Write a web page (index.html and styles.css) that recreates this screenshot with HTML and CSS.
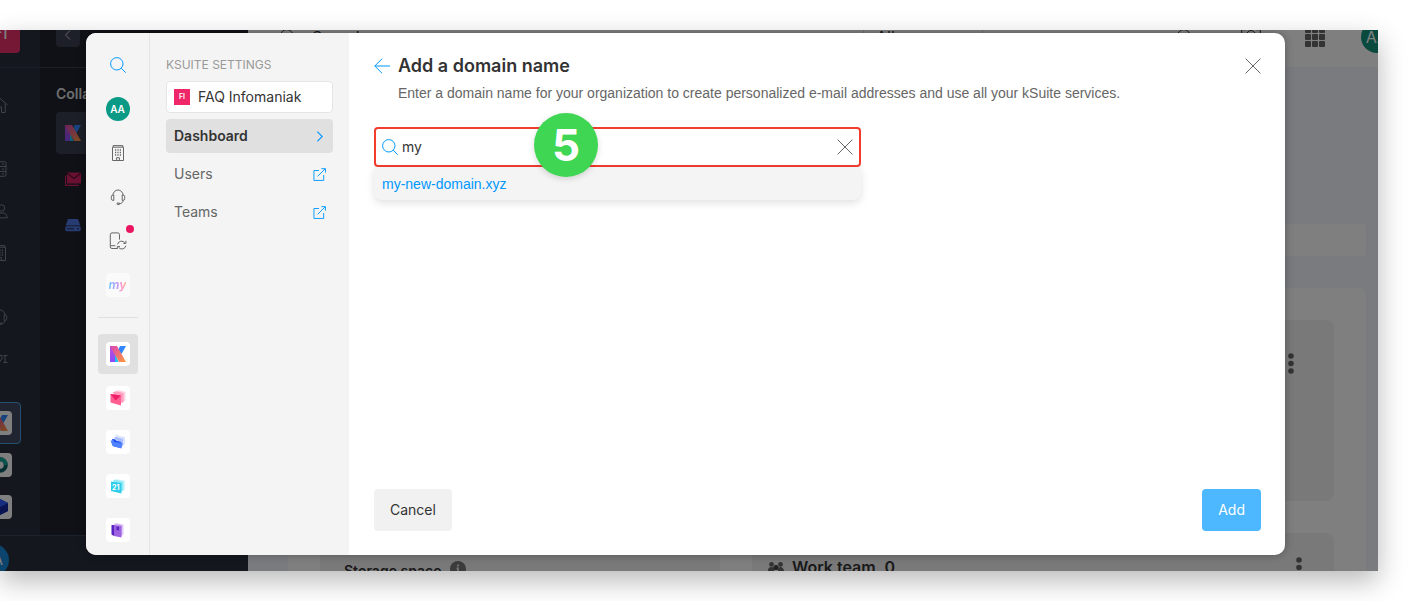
FILE: index.html
```html
<!DOCTYPE html>
<html lang="en">
<head>
    <meta charset="UTF-8">
    <meta name="viewport" content="width=device-width, initial-scale=1.0">
    <title>kSuite - Add a domain name</title>
    <link rel="stylesheet" href="styles.css">
</head>
<body>

<svg class="sprite" aria-hidden="true">
    <defs>
        <linearGradient id="k-left" x1="0" y1="0" x2="0" y2="1">
            <stop offset="0" stop-color="#c44fd0"/>
            <stop offset="1" stop-color="#8a4bff"/>
        </linearGradient>
        <linearGradient id="k-band" x1="0" y1="0" x2="1" y2="1">
            <stop offset="0" stop-color="#d844b8"/>
            <stop offset="1" stop-color="#ff9a3c"/>
        </linearGradient>
    </defs>
    <symbol id="i-search" viewBox="0 0 16 16"><circle cx="6.8" cy="6.8" r="6.2"/><path d="M11.2 11.2l4.5 4.5"/></symbol>
    <symbol id="i-building" viewBox="0 0 16 16"><path d="M2.5 2.2h11v13.3h-11zM3.2 2V.6h9.6V2M6.6 15.3v-2.6h2.8v2.6"/><path d="M5 5h1.2M7.4 5h1.2M9.8 5H11M5 7.5h1.2M7.4 7.5h1.2M9.8 7.5H11M5 10h1.2M7.4 10h1.2M9.8 10H11" stroke-width="1.4"/></symbol>
    <symbol id="i-headset" viewBox="0 0 16 16"><path d="M3 6.2a5 5.2 0 0 1 10 0M3.8 6v5.400H3A1.800 1.800 0 0 1 1.300 9.600V7.800A1.800 1.800 0 0 1 3 6zM12.200 6v5.400h.8a1.800 1.800 0 0 0 1.700-1.800V7.800A1.800 1.800 0 0 0 13 6zM13 11.400c0 2-1.500 3.200-3.600 3.400M7.200 14h2.200v1.400H7.200z"/></symbol>
    <symbol id="i-sync" viewBox="0 0 18 18"><path d="M8 16.500H3A1.700 1.700 0 0 1 1.300 14.800V2.600A1.700 1.700 0 0 1 3 .9h5.800a1.700 1.700 0 0 1 1.700 1.700v5M1.400 13.700h5"/><path d="M8.600 12.400a4 4 0 0 1 7.300-1.400M16.900 8.800v2.600h-2.600M16.800 13.700a4 4 0 0 1-7.400 1.300M8.300 17v-2.500h2.600"/></symbol>
    <symbol id="i-k" viewBox="0 0 16 16"><path d="M0 0h6v16H0z" fill="url(#k-left)"/><path d="M5 7l3.500 9H5z" fill="#1bc4f0"/><path d="M10 0h6l-4.500 8L8 4z" fill="#2f86ff"/><path d="M0 0h7l9 16H9z" fill="url(#k-band)"/></symbol>
    <symbol id="i-close" viewBox="0 0 16 16"><path d="M.6.6l14.800 14.800M15.400.6L.6 15.400"/></symbol>
    <symbol id="i-external" viewBox="0 0 14 14"><path d="M6.500 2.700H1v10.700h10.500V7.600M5 9l8-8M9 .7h4.400V5"/></symbol>
    <symbol id="i-dots" viewBox="0 0 6 21"><circle cx="3" cy="3" r="2.800"/><circle cx="3" cy="10.500" r="2.800"/><circle cx="3" cy="18" r="2.800"/></symbol>
    <symbol id="i-users" viewBox="0 0 16 16"><circle cx="9.500" cy="5" r="3.200"/><path d="M1 14c.3-3 2-4.500 4.500-4.700M5.500 14.800c0-3.600 1.500-5 4.500-5s5 1.600 5.300 5zM4.500 8A2.500 2.500 0 1 1 6 3.200"/></symbol>
</svg>

<div class="frame">
    <div class="app">
        <aside class="dark-nav">
            <div class="dark-rail">
                <div class="org"><span class="org-logo">FI</span></div>
                <nav class="rail-groups" aria-label="Products">
                    <div class="rail-group">
                        <a href="#"><svg class="line" viewBox="0 0 16 16"><path d="M.5 8L8 1.300 15.500 8M2.800 6.500v9h3.700V10h3v5.500h3.700v-9"/></svg></a>
                    </div>
                    <div class="rail-group">
                        <a href="#"><svg class="line" viewBox="0 0 16 16"><rect x="1.500" y=".7" width="12.500" height="14.600" rx="1.500"/><path d="M1.500 5.500H14M1.500 10.400H14M10 3h2M10 8h2M10 13h2"/></svg></a>
                        <a href="#"><svg class="line"><use href="#i-users"/></svg></a>
                        <a href="#"><svg class="line"><use href="#i-building"/></svg></a>
                    </div>
                    <div class="rail-group">
                        <a href="#"><svg class="line"><use href="#i-headset"/></svg></a>
                        <a href="#"><svg class="line" viewBox="0 0 16 16"><path d="M15.500 4.500h-4M15.500 11.500h-4M13 4.500v7M1 12l4-3.500M5 4.500h5v3L7.500 11 4.500 8zM2 4l2 2"/></svg></a>
                    </div>
                    <div class="rail-group">
                        <a href="#" class="picked"><span class="tile"><svg><use href="#i-k"/></svg></span></a>
                        <a href="#"><span class="tile"><svg viewBox="0 0 16 16"><circle cx="8" cy="8" r="5.800" fill="none" stroke="#0b5d66" stroke-width="4"/><path d="M8 2.200A5.800 5.800 0 0 1 13.800 8" fill="none" stroke="#19a79c" stroke-width="4"/></svg></span></a>
                        <a href="#"><span class="tile"><svg viewBox="0 0 16 16"><path d="M8 0l8 4v8l-8 4-8-4V4z" fill="#1d3fd0"/><path d="M8 8l8-4v8l-8 4z" fill="#1428a0"/><path d="M8 8l8-4-8-4z" fill="#2c5cff"/></svg></span></a>
                    </div>
                </nav>
            </div>
            <div class="dark-panel">
                <div class="panel-top">
                    <button type="button" class="collapse" aria-label="Collapse"><svg viewBox="0 0 10 10"><path d="M7 .5L2.500 5 7 9.500"/></svg></button>
                </div>
                <h2>Collaboration</h2>
                <a href="#" class="panel-item current" aria-label="kSuite"><svg><use href="#i-k"/></svg></a>
                <a href="#" class="panel-item" aria-label="Mail"><svg viewBox="0 0 16 16"><path d="M2 1.500h14v11H2z" fill="#d42060"/><path d="M2 2l7 5.500L16 2" fill="none" stroke="#5c1231" stroke-width="1.200"/><path d="M.6 4.500v9.800H14" fill="none" stroke="#d42060" stroke-width="1.200"/></svg></a>
                <a href="#" class="panel-item" aria-label="Drive"><svg viewBox="0 0 16 16"><path d="M3 2h10l2.300 6.500H.7z" fill="#5078e8"/><rect x=".3" y="9.300" width="15.400" height="5" rx="1.500" fill="#5078e8"/><path d="M2 11.800h7M12 11.800h2" stroke="#1d2440"/></svg></a>
            </div>
            <div class="dark-foot"><span class="help">A</span></div>
        </aside>

        <div class="content">
            <header class="topbar">
                <svg class="line"><use href="#i-search"/></svg>
                <span class="topbar-search">Search</span>
                <span class="topbar-scope">All</span>
                <svg class="line"><use href="#i-search"/></svg>
                <svg class="line wide" viewBox="0 0 20 16"><path d="M.7 5V.7H5M15 .7h4.300V5M19.300 11v4.300H15M5 15.300H.7V11"/><circle cx="10" cy="6" r="4.500"/></svg>
                <span class="grid-dots"><i></i><i></i><i></i><i></i><i></i><i></i><i></i><i></i><i></i></span>
                <span class="me">AA</span>
            </header>
            <div class="banner"></div>
            <div class="board">
                <div class="block tall"><svg class="more"><use href="#i-dots"/></svg></div>
                <div class="block">Storage space
                    <svg class="info" viewBox="0 0 16 16"><circle cx="8" cy="8" r="8" fill="#777"/><path d="M8 3.500v2M6.500 7.500H8V12" stroke="#ddd" stroke-width="2" fill="none"/></svg>
                </div>
                <div class="block team">
                    <svg class="people" viewBox="0 0 16 14"><g fill="#666"><circle cx="3.500" cy="2.400" r="2.400"/><circle cx="12.500" cy="2.400" r="2.400"/><path d="M0 12V8.500Q0 5 3.500 5T6 9v3zM10 12V9q0-4 2.500-4T16 8.500V12z"/></g><circle cx="8" cy="5.500" r="2.600" fill="#444"/><path d="M4 14v-2.500Q4 9 8 9t4 2.500V14z" fill="#444"/></svg>
                    Work team, 0
                    <svg class="more"><use href="#i-dots"/></svg>
                </div>
            </div>
        </div>
    </div>

    <div class="backdrop"></div>

    <div class="modal" role="dialog" aria-labelledby="title">
        <nav class="apps" aria-label="Applications">
            <a href="#" class="blue" aria-label="Search"><svg class="line"><use href="#i-search"/></svg></a>
            <a href="#"><span class="avatar">AA</span></a>
            <a href="#" aria-label="Organization"><svg class="line"><use href="#i-building"/></svg></a>
            <a href="#" aria-label="Support"><svg class="line"><use href="#i-headset"/></svg></a>
            <a href="#" aria-label="Sync" class="has-badge"><svg class="line large"><use href="#i-sync"/></svg></a>
            <a href="#"><span class="tile my"><span>my</span></span></a>
            <hr>
            <a href="#" class="active" aria-label="kSuite"><span class="tile"><svg><use href="#i-k"/></svg></span></a>
            <a href="#" aria-label="Mail"><span class="tile"><svg viewBox="0 0 16 16"><path d="M5 1.500L9 0l6.500 2v8.500L12 13z" fill="#ffd3e1"/><path d="M2.500 2.500L6 1.300 13.500 3v9l-2 1z" fill="#ff9dbd"/><path d="M.5 4L11 5.500V15.500L.5 12.500z" fill="#ff5e92"/><path d="M.5 4L11 5.500 5.500 10.500z" fill="#f01e68"/></svg></span></a>
            <a href="#" aria-label="Drive"><span class="tile"><svg viewBox="0 0 16 16"><path d="M5 1.500L7 .5l2 1.500 6 1v7l-3 3z" fill="#dbe4ff"/><path d="M3.500 3.500L6 3l7 2v7z" fill="#a9beff"/><path d="M2 5l3 .2 1.500 1.500L11 8v6l-7-1.500z" fill="#1d4bf0"/><path d="M.5 6.500h3L4.500 8l8 1-1 5.500-9-2.500z" fill="#4f82ff"/></svg></span></a>
            <a href="#" aria-label="Calendar"><span class="tile"><svg viewBox="0 0 16 16"><path d="M6 1l9 1.500v9L12 13z" fill="#d4f7fb"/><path d="M3 2.500L5 1.500l8.500 2v9l-2 1z" fill="#93e9f5"/><path d="M1 3.500L11.500 5v10.500L1 13z" fill="#2fcdea"/><text x="2" y="12" font-size="7">21</text></svg></span></a>
            <a href="#" aria-label="Notes"><span class="tile"><svg viewBox="0 0 16 16"><path d="M7 1l7 1.500v9.500L12 14z" fill="#eee0fb"/><path d="M4 2l2-.7 6.500 1.700v10L11 14z" fill="#d1b2f3"/><path d="M4 3l7.500 1v11.500L4 14z" fill="#9c62e0"/><path d="M1.500 3H4v11l-2.500-1.500z" fill="#5a22c0"/><path d="M6.500 4.500l2.500.3v4L7.800 8l-1.300.5z" fill="#5a22c0"/></svg></span></a>
        </nav>

        <aside class="settings">
            <h3>KSUITE SETTINGS</h3>
            <button type="button" class="org-select"><span class="org-badge">FI</span>FAQ Infomaniak</button>
            <nav class="menu" aria-label="Settings">
                <a href="#" class="active">Dashboard<svg class="chevron" viewBox="0 0 12 12"><path d="M4 1.500L8.500 6 4 10.500"/></svg></a>
                <a href="#">Users<svg><use href="#i-external"/></svg></a>
                <a href="#">Teams<svg><use href="#i-external"/></svg></a>
            </nav>
        </aside>

        <main class="main">
            <header class="main-head">
                <a href="#" class="back" aria-label="Back"><svg viewBox="0 0 16 16"><path d="M16 8H.8M8 .8L.8 8 8 15.200"/></svg></a>
                <h1 id="title">Add a domain name</h1>
                <button type="button" class="icon-btn" aria-label="Close"><svg class="line"><use href="#i-close"/></svg></button>
            </header>
            <p class="intro">Enter a domain name for your organization to create personalized e-mail addresses and use all your kSuite services.</p>

            <form class="finder" id="domain-form">
                <div class="field">
                    <svg class="line"><use href="#i-search"/></svg>
                    <input type="text" value="my" aria-label="Domain name">
                    <button type="button" class="icon-btn" aria-label="Clear"><svg class="line"><use href="#i-close"/></svg></button>
                </div>
                <a href="#" class="suggestion">my-new-domain.xyz</a>
                <span class="step">5</span>
            </form>

            <footer class="actions">
                <button type="button" class="btn">Cancel</button>
                <button type="submit" form="domain-form" class="btn btn-primary">Add</button>
            </footer>
        </main>
    </div>
</div>

</body>
</html>
```
FILE: styles.css
```css
* {
    box-sizing: border-box;
}

body {
    margin: 0;
    background: #fff;
    color: #333;
    font-family: Inter, "Liberation Sans", Arial, sans-serif;
    font-size: 14px;
    line-height: 20px;
    overflow: hidden;
}

a {
    color: inherit;
    text-decoration: none;
}

button {
    font: inherit;
    color: inherit;
    border: 0;
    cursor: pointer;
}

h1, h2, h3, p {
    margin: 0;
}

svg {
    display: block;
    width: 16px;
    height: 16px;
    flex: none;
}

.sprite {
    position: absolute;
    width: 0;
    height: 0;
}

.line {
    fill: none;
    stroke: currentColor;
    stroke-width: 1;
}

.tile {
    display: flex;
    align-items: center;
    justify-content: center;
    width: 24px;
    height: 24px;
    border-radius: 4px;
    background: #fff;
}

.frame {
    position: relative;
    height: calc(100vh - 60px);
    margin: 30px 30px 30px 0;
    overflow: hidden;
}

body::before {
    content: "";
    position: absolute;
    inset: 30px 30px 30px 0;
    box-shadow: 0 10px 26px rgba(0, 0, 0, 0.28);
}

/* page behind the dialog */
.app {
    display: flex;
    height: calc(100% + 23px);
    margin: -23px 0 0 -40px;
}

.dark-nav {
    display: grid;
    grid-template: 1fr 36px / 80px 208px;
    background: #282e3c;
}

.dark-rail {
    display: flex;
    flex-direction: column;
    align-items: center;
    color: #7c8894;
}

.org {
    display: flex;
    align-items: flex-end;
    justify-content: center;
    width: 100%;
    height: 61px;
    padding-bottom: 14px;
    border-bottom: 1px solid #3a4050;
}

.org-logo {
    width: 40px;
    height: 40px;
    border-radius: 4px;
    background: #e8306c;
    color: #fff;
    font-size: 18px;
    line-height: 40px;
    text-align: center;
}

.rail-groups {
    display: flex;
    flex-direction: column;
    gap: 22px;
    padding-top: 16px;
}

.rail-group a {
    display: flex;
    align-items: center;
    justify-content: center;
    width: 42px;
    height: 42px;
}

.rail-group .picked {
    border: 1px solid #4a9fe0;
    border-radius: 4px;
    background: #404860;
}

.dark-panel {
    background: #1e222d;
}

.panel-top {
    display: flex;
    align-items: flex-end;
    height: 61px;
    padding: 0 16px 20px;
    border-bottom: 1px solid #3a4050;
}

.collapse {
    display: flex;
    align-items: center;
    justify-content: center;
    width: 24px;
    height: 24px;
    padding: 0;
    border-radius: 4px;
    background: #3a4050;
}

.collapse svg {
    width: 10px;
    height: 10px;
    fill: none;
    stroke: #ccc;
}

.dark-panel h2 {
    padding: 16px 16px 8px;
    color: #ddd;
    font-size: 14px;
    font-weight: 600;
}

.panel-item {
    display: flex;
    align-items: center;
    height: 42px;
    margin: 0 16px 4px;
    padding-left: 9px;
    border-radius: 4px;
}

.panel-item.current {
    background: #3a3e50;
}

.dark-foot {
    grid-column: 1 / -1;
    padding: 8px 31px;
    border-top: 1px solid #3a4658;
}

.help {
    display: block;
    width: 32px;
    height: 32px;
    margin-left: -14px;
    padding-right: 6px;
    border-radius: 50%;
    background: #1688d8;
    color: #fff;
    line-height: 32px;
    text-align: right;
}

.content {
    flex: 1;
    background: #f4f6fc;
}

.topbar {
    display: flex;
    align-items: center;
    height: 60px;
    padding-left: 32px;
    background: #fff;
    font-size: 16px;
    overflow: hidden;
}

.topbar-search {
    flex: 1;
    padding-left: 16px;
}

.topbar-scope {
    width: 120px;
    margin-right: 194px;
    padding: 8px 12px;
    border: solid #ddd;
    border-width: 0 1px;
}

.topbar .wide {
    width: 20px;
    margin: 0 44px 0 48px;
}

.grid-dots {
    display: grid;
    grid-template-columns: repeat(3, 6px);
    gap: 1px;
}

.grid-dots i {
    height: 6px;
    border-radius: 1px;
    background: #666;
}

.me {
    width: 32px;
    height: 32px;
    margin: 0 -15px 0 36px;
    border-radius: 50%;
    background: #12927c;
    color: #fff;
    line-height: 32px;
    text-align: center;
}

.banner {
    height: 32px;
    margin: 157px 12px 32px 40px;
    border-radius: 4px;
    background: #fff;
}

.board {
    display: grid;
    grid-template: 181px 1fr / 400px 1fr;
    gap: 32px;
    height: 400px;
    margin: 0 12px 0 40px;
    padding: 32px;
    border-radius: 8px;
    background: #fff;
}

.block {
    display: flex;
    align-items: flex-start;
    gap: 8px;
    padding: 28px 24px;
    border-radius: 8px;
    background: #f3f3f3;
    font-weight: 600;
}

.block.tall {
    grid-column: 1 / -1;
    padding: 33px 40px;
}

.block.team {
    padding: 24px 32px 24px 16px;
    font-size: 16px;
}

.more {
    width: 6px;
    height: 21px;
    margin-left: auto;
    fill: #666;
}

.people {
    margin-top: 4px;
}

.backdrop {
    position: absolute;
    inset: 0;
    background: rgba(0, 0, 0, 0.5);
}

/* dialog */
.modal {
    position: absolute;
    inset: 3px 93px 16px 86px;
    display: flex;
    border-radius: 10px;
    background: #fff;
    box-shadow: 0 0 8px rgba(0, 0, 0, 0.3);
    overflow: hidden;
}

.apps {
    width: 64px;
    padding-top: 12px;
    border-right: 1px solid #e5e5e5;
    background: #f4f4f4;
    color: #666;
}

.apps a {
    position: relative;
    display: flex;
    align-items: center;
    justify-content: center;
    width: 40px;
    height: 40px;
    margin: 0 auto;
    border-radius: 4px;
}

.apps .blue {
    color: #0098ff;
}

.apps .active {
    background: #e0e0e0;
}

.apps a + a {
    margin-top: 4px;
}

.apps hr {
    width: 40px;
    height: 1px;
    margin: 12px auto 16px;
    border: 0;
    background: #e0e0e0;
}

.apps .large {
    width: 18px;
    height: 18px;
}

.has-badge::after {
    content: "";
    position: absolute;
    top: 4px;
    right: 4px;
    width: 8px;
    height: 8px;
    border-radius: 50%;
    background: #ea1560;
}

.avatar {
    width: 24px;
    height: 24px;
    border-radius: 50%;
    background: #0a9a86;
    color: #fff;
    font-size: 10px;
    font-weight: 600;
    line-height: 24px;
    text-align: center;
}

.apps text {
    fill: #fff;
    font-weight: bold;
}

.my {
    background: #fafafa;
    font-size: 12px;
    font-style: italic;
    font-weight: bold;
}

.my span {
    background: linear-gradient(90deg, #7cc8ff, #b79cff 45%, #ff9cc8 75%, #ffb89c);
    background-clip: text;
    color: transparent;
}

.settings {
    width: 199px;
    padding: 22px 16px;
    background: #f4f4f4;
}

.settings h3 {
    margin-bottom: 6px;
    color: #999;
    font-size: 12px;
    font-weight: normal;
}

.org-select {
    display: flex;
    align-items: center;
    gap: 8px;
    width: 100%;
    height: 32px;
    margin-bottom: 6px;
    padding: 0 7px;
    border: 1px solid #e5e5e5;
    border-radius: 4px;
    background: #fff;
}

.org-badge {
    width: 16px;
    height: 16px;
    background: #f0266a;
    color: #fff;
    font-size: 7px;
    font-weight: 600;
    line-height: 16px;
    text-align: center;
}

.menu {
    display: flex;
    flex-direction: column;
    gap: 4px;
}

.menu a {
    display: flex;
    align-items: center;
    justify-content: space-between;
    height: 34px;
    padding: 0 7px 0 8px;
    border-radius: 4px;
    color: #666;
}

.menu .active {
    background: #e0e0e0;
    color: #333;
    font-weight: 600;
}

.menu svg {
    width: 13px;
    height: 13px;
    fill: none;
    stroke: #0098ff;
}

.main {
    display: flex;
    flex: 1;
    flex-direction: column;
    padding: 21px 24px 24px 25px;
}

.main-head {
    display: flex;
    align-items: center;
    gap: 8px;
    height: 24px;
}

.main-head h1 {
    flex: 1;
    font-size: 18px;
    font-weight: 600;
}

.back svg {
    fill: none;
    stroke: #0098ff;
}

.icon-btn {
    padding: 0;
    background: none;
    color: #666;
}

.intro {
    margin: 5px 0 24px;
    padding-left: 24px;
    color: #666;
    font-family: "Liberation Sans", Arial, sans-serif;
}

.finder {
    position: relative;
    width: 487px;
}

.field {
    display: flex;
    align-items: center;
    gap: 4px;
    height: 40px;
    padding: 0 6px;
    border: 2px solid #f23c2e;
    border-radius: 4px;
    color: #0098ff;
}

.field input {
    flex: 1;
    min-width: 0;
    padding: 0;
    border: 0;
    outline: 0;
    color: #333;
    font: inherit;
}

.suggestion {
    display: block;
    padding: 7px 8px 6px;
    border-radius: 0 0 8px 8px;
    background: #f4f4f4;
    box-shadow: 0 3px 8px rgba(0, 0, 0, 0.12);
    color: #0098ff;
    font-family: "Liberation Sans", Arial, sans-serif;
}

.step {
    position: absolute;
    top: -14px;
    left: 160px;
    width: 64px;
    height: 64px;
    border-radius: 50%;
    background: #3fd653;
    box-shadow: 0 2px 6px rgba(0, 0, 0, 0.15);
    color: #fff;
    font-size: 44px;
    font-weight: bold;
    line-height: 64px;
    text-align: center;
}

.actions {
    display: flex;
    justify-content: space-between;
    margin-top: auto;
}

.btn {
    height: 42px;
    padding: 0 16px;
    border-radius: 4px;
    background: #f1f1f1;
}

.btn-primary {
    background: #4db7ff;
    color: #fff;
}
```
